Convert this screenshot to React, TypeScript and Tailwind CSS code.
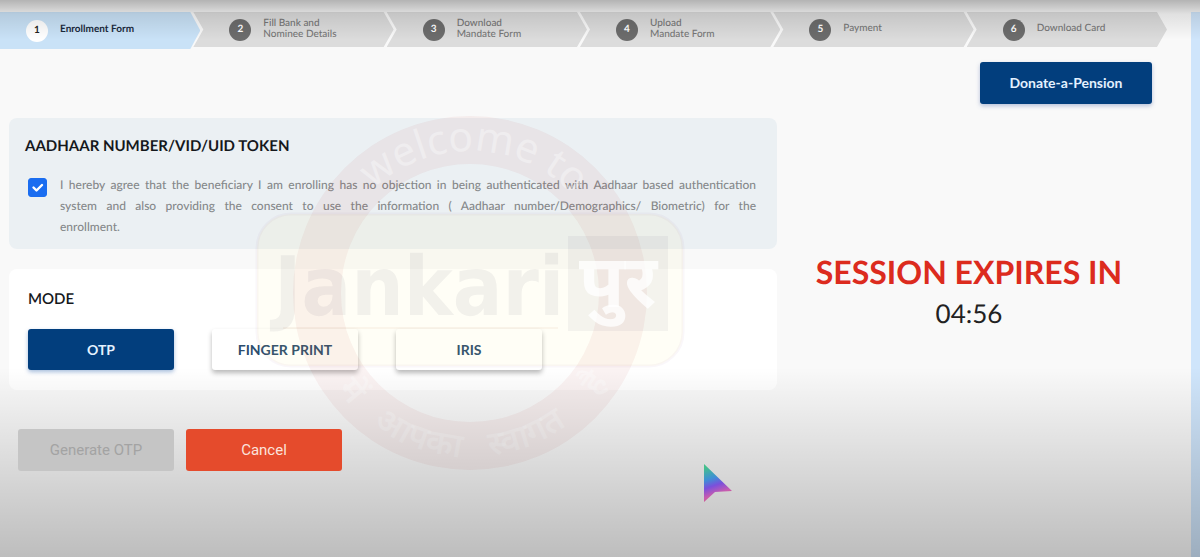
import clsx from "clsx";
import { useState } from "react";

type Step = {
  id: number;
  lines: string[];
};

const steps: Step[] = [
  { id: 1, lines: ["Enrollment Form"] },
  { id: 2, lines: ["Fill Bank and", "Nominee Details"] },
  { id: 3, lines: ["Download", "Mandate Form"] },
  { id: 4, lines: ["Upload", "Mandate Form"] },
  { id: 5, lines: ["Payment"] },
  { id: 6, lines: ["Download Card"] },
];

const modes = ["OTP", "FINGER PRINT", "IRIS"];

// words on the lower arc of the seal
const sealWords = [
  { text: "में", offset: "22%" },
  { text: "आपका", offset: "39%" },
  { text: "स्वागत", offset: "62%" },
  { text: "है", offset: "80%" },
];

function StepBar({ current }: { current: number }) {
  return (
    <ol className="mr-6 flex items-start">
      {steps.map((step) => {
        const active = step.id === current;
        return (
          <li
            key={step.id}
            className={clsx(
              "flex flex-1 items-center text-[10px] leading-[11px]",
              step.id === 1
                ? "[clip-path:polygon(0_0,calc(100%-10px)_0,100%_50%,calc(100%-10px)_100%,0_100%)]"
                : "-ml-[7px] [clip-path:polygon(0_0,calc(100%-10px)_0,100%_50%,calc(100%-10px)_100%,0_100%,10px_50%)]",
              active
                ? "h-[37px] bg-[#c9e2f7] font-bold text-[#1b2a3d]"
                : "h-[35px] bg-[#dcdcdc] font-medium text-[#777]"
            )}
          >
            <span
              className={clsx(
                "mr-3 flex size-[22px] shrink-0 items-center justify-center rounded-full font-bold",
                step.id === 1 ? "ml-[26px]" : "ml-9",
                active ? "bg-white text-[#222]" : "bg-[#6c6c6c] text-white"
              )}
            >
              {step.id}
            </span>
            <span className="pb-0.5">
              {step.lines.map((line) => (
                <span key={line} className="block">
                  {line}
                </span>
              ))}
            </span>
          </li>
        );
      })}
    </ol>
  );
}

function ConsentCard() {
  const [agreed, setAgreed] = useState(true);

  return (
    <section className="rounded-lg bg-[#ebf0f3] px-4 pt-[18px] pb-3">
      <h2 className="text-[15px] leading-5 font-bold text-[#15181c]">
        AADHAAR NUMBER/VID/UID TOKEN
      </h2>
      <div className="mt-[18px] flex items-start">
        <span className="mt-1 ml-[3px] mr-[13px] grid shrink-0">
          <input
            id="consent"
            type="checkbox"
            checked={agreed}
            onChange={(e) => setAgreed(e.target.checked)}
            className="peer col-start-1 row-start-1 size-[19px] appearance-none rounded-[3px] border border-[#1a6df0] bg-white checked:bg-[#1a6df0]"
          />
          <svg
            viewBox="0 0 19 19"
            className="pointer-events-none invisible col-start-1 row-start-1 size-[19px] peer-checked:visible"
          >
            <path
              d="M5.5 9.5l3 3 5.5-5.5"
              fill="none"
              stroke="#fff"
              strokeWidth="2.4"
              strokeLinecap="round"
              strokeLinejoin="round"
            />
          </svg>
        </span>
        <label
          htmlFor="consent"
          className="mr-[5px] flex-1 text-xs leading-[21px] font-medium text-[#85888a]"
        >
          <span className="block text-justify [text-align-last:justify]">
            I hereby agree that the beneficiary I am enrolling has no objection
            in being authenticated with Aadhaar based authentication
          </span>
          <span className="block text-justify [text-align-last:justify]">
            system and also providing the consent to use the information (
            Aadhaar number/Demographics/ Biometric) for the
          </span>
          <span className="block">enrollment.</span>
        </label>
      </div>
    </section>
  );
}

function ModeCard() {
  const [mode, setMode] = useState("OTP");

  return (
    <section className="rounded-lg bg-white px-[19px] pt-5 pb-5">
      <h2 className="text-[15px] leading-5 font-semibold text-[#15181c]">
        MODE
      </h2>
      <div className="mt-5 flex gap-[38px]">
        {modes.map((item) => (
          <button
            key={item}
            type="button"
            onClick={() => setMode(item)}
            className={clsx(
              "h-[41px] w-[146px] rounded-[3px] text-sm font-bold",
              mode === item
                ? "bg-[#023e7d] text-[#e4f1ff] shadow-[0_2px_4px_rgba(60,110,180,0.45)]"
                : "bg-white text-[#2c4d6e] shadow-[0_3px_5px_rgba(0,0,0,0.28)]"
            )}
          >
            {item}
          </button>
        ))}
      </div>
    </section>
  );
}

function Watermark() {
  return (
    <svg
      viewBox="0 0 430 356"
      className="pointer-events-none absolute top-[115px] left-[255px] w-[430px]"
      aria-hidden="true"
    >
      <defs>
        <path id="arc-top" d="M73 178a142 142 0 0 1 284 0" />
        <path id="arc-bottom" d="M51 178a164 164 0 0 0 328 0" />
      </defs>
      <path
        fillRule="evenodd"
        fill="#b01818"
        fillOpacity="0.05"
        d="M215 1a177 177 0 1 0 0 354a177 177 0 1 0 0-354zM215 49a129 129 0 1 1 0 258a129 129 0 1 1 0-258z"
      />
      <g
        fill="#fff"
        fillOpacity="0.35"
        textAnchor="middle"
        fontFamily="'Noto Sans', sans-serif"
      >
        <text fontSize="41">
          <textPath href="#arc-top" startOffset="51%">
            welcome to
          </textPath>
        </text>
        {sealWords.map((word) => (
          <text key={word.text} fontSize="34" fontWeight="600">
            <textPath href="#arc-bottom" startOffset={word.offset}>
              {word.text}
            </textPath>
          </text>
        ))}
      </g>
      <rect
        x="2"
        y="99"
        width="426"
        height="152"
        rx="34"
        fill="#ffe860"
        fillOpacity="0.06"
        stroke="#7a3a7a"
        strokeOpacity="0.04"
        strokeWidth="3"
      />
      <text
        x="19"
        y="200"
        fontFamily="'DejaVu Sans Condensed', 'Liberation Sans', sans-serif"
        fontSize="82"
        fontWeight="700"
        fill="#20204a"
        fillOpacity="0.06"
      >
        Jankari
      </text>
      <path d="M28 213h275" stroke="#c06030" strokeOpacity="0.06" strokeWidth="2" />
      <rect x="313" y="121" width="100" height="95" fill="#20204a" fillOpacity="0.05" />
      <text
        x="363"
        y="192"
        textAnchor="middle"
        fontFamily="'Noto Sans', sans-serif"
        fontSize="74"
        fontWeight="700"
        fill="#fff"
        fillOpacity="0.8"
      >
        पुर
      </text>
    </svg>
  );
}

function Pointer() {
  return (
    <svg
      viewBox="0 0 28 38"
      className="pointer-events-none absolute top-[464px] left-[704px] z-20 w-7"
      aria-hidden="true"
    >
      <defs>
        <linearGradient id="pointer-fill" x1="0" y1="0" x2="0.25" y2="1">
          <stop offset="0.1" stopColor="#45c08c" />
          <stop offset="0.42" stopColor="#3f8fd6" />
          <stop offset="0.62" stopColor="#7a50dc" />
          <stop offset="0.85" stopColor="#c95cae" />
          <stop offset="1" stopColor="#cc5a86" />
        </linearGradient>
      </defs>
      <path d="M0 0L28 27L11 28L0 38z" fill="url(#pointer-fill)" />
    </svg>
  );
}

export default function App() {
  return (
    <div className="relative flex min-h-screen overflow-hidden bg-[#f9f9f9] pt-3 font-['Lato',sans-serif] [text-rendering:geometricPrecision]">
      <div className="min-w-0 flex-1">
        <StepBar current={1} />

        <main className="pt-[13px] pr-[30px] pl-[9px]">
          <div className="flex justify-end pr-[9px]">
            <button
              type="button"
              className="h-[42px] w-[172px] rounded-[3px] bg-[#023e7d] text-sm font-bold text-[#e4f1ff] shadow-[0_2px_4px_rgba(60,90,160,0.35)]"
            >
              Donate-a-Pension
            </button>
          </div>

          <div className="mt-[14px] grid grid-cols-[2fr_1fr]">
            <div className="flex flex-col gap-5">
              <ConsentCard />
              <ModeCard />
            </div>
            <div className="pt-[133px] text-center">
              <p className="text-[32px] leading-[42px] font-bold text-[#dc2b1e]">
                SESSION EXPIRES IN
              </p>
              <p className="text-[26px] leading-10 text-[#222]">04:56</p>
            </div>
          </div>

          <div className="relative z-20 mt-[39px] flex gap-3 pl-[9px] font-['Roboto',sans-serif] text-[15px]">
            <button
              type="button"
              disabled
              className="h-[42px] w-[156px] rounded-[3px] bg-[#c5c5c5] text-[#a3a3a3]"
            >
              Generate OTP
            </button>
            <button
              type="button"
              className="h-[42px] w-[156px] rounded-[3px] bg-[#e54b2c] text-[#fbe3dc]"
            >
              Cancel
            </button>
          </div>
        </main>
      </div>

      <div className="w-[9px] shrink-0 bg-[#cfe5fb]" />

      <Watermark />
      <Pointer />
      <div className="pointer-events-none absolute inset-x-0 top-0 h-10 bg-linear-to-b from-black/28 via-black/10 via-35% to-transparent" />
      <div className="pointer-events-none absolute inset-x-0 bottom-0 h-[190px] bg-linear-to-b from-transparent to-black/24" />
    </div>
  );
}
